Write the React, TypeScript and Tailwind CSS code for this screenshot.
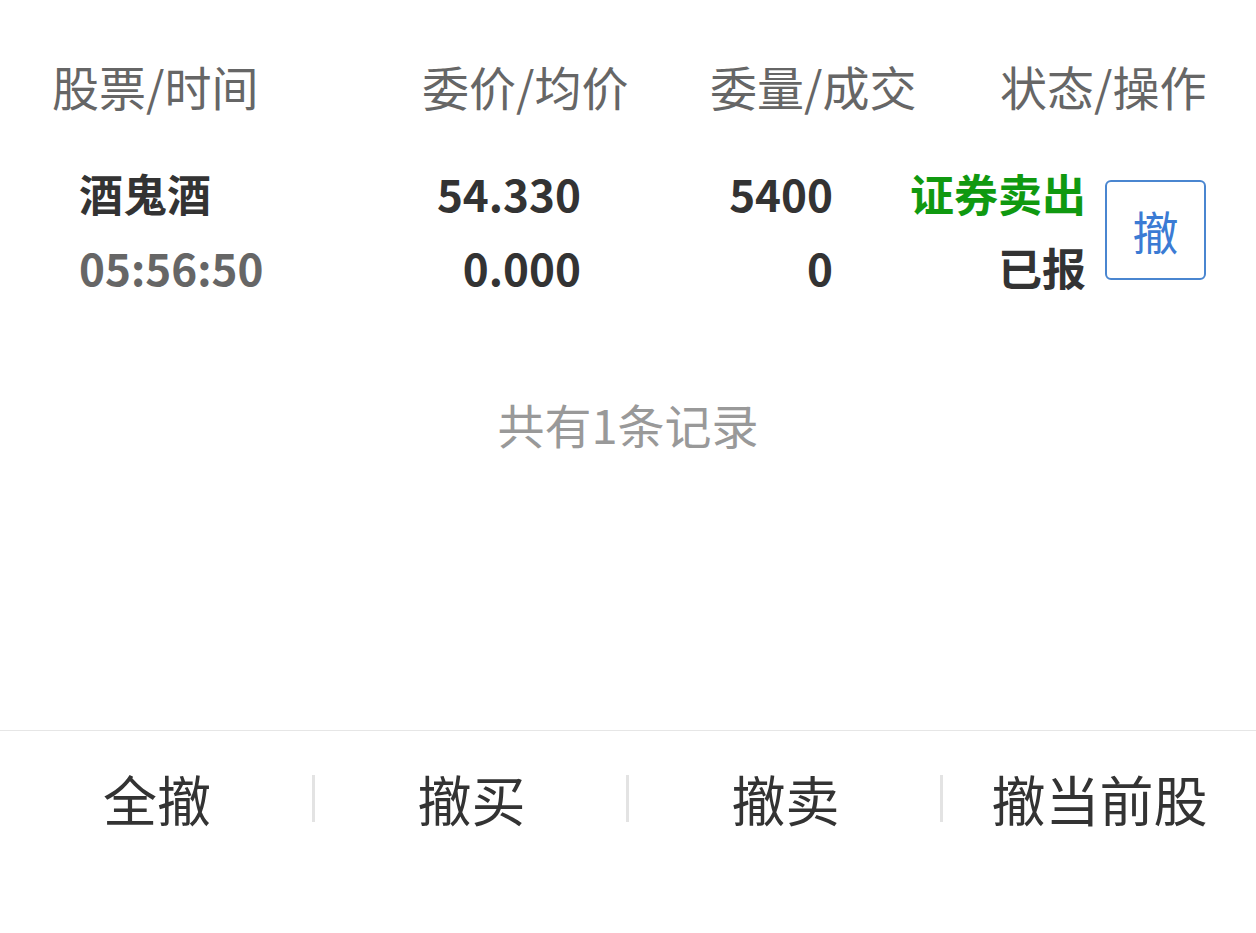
const font = { fontFamily: '"Noto Sans CJK SC", "Noto Sans", sans-serif' };

const actions = ["全撤", "撤买", "撤卖", "撤当前股"];

export default function App() {
  return (
    <div
      className="flex h-[933px] w-[1256px] flex-col bg-white font-['Noto_Sans_CJK_SC',sans-serif]"
      style={font}
    >
      <div className="flex-1">
        {/* column headers */}
        <div className="flex pl-[52px] pt-[60px] text-[47px] leading-[52px] text-[#666]">
          <div className="w-[370px]">股票/时间</div>
          <div className="w-[288px]">委价/均价</div>
          <div className="w-[290px]">委量/成交</div>
          <div>状态/操作</div>
        </div>

        {/* order row */}
        <div className="mt-[44px] flex items-center pl-[79px] text-[44px] font-bold leading-[74px] text-[#333]">
          <div className="w-[182px]">
            <div>酒鬼酒</div>
            <div className="text-[#666]">05:56:50</div>
          </div>
          <div className="w-[320px] text-right">
            <div>54.330</div>
            <div>0.000</div>
          </div>
          <div className="w-[252px] text-right">
            <div>5400</div>
            <div>0</div>
          </div>
          <div className="w-[253px] text-right">
            <div className="text-[#109910]">证券卖出</div>
            <div>已报</div>
          </div>
          <button className="ml-[19px] flex h-[100px] w-[101px] items-center justify-center rounded-[6px] border-[2.5px] border-[#4a86d0] text-[46px] font-normal text-[#3b7bd4]">
            撤
          </button>
        </div>

        <div className="mt-[90px] text-center text-[47px] leading-[60px] text-[#999]">
          共有1条记录
        </div>
      </div>

      {/* bottom actions */}
      <div className="h-[203px] border-t border-[#e6e6e6]">
        <div className="flex h-[134px] items-center">
          {actions.map((label, i) => (
            <div key={label} className="flex flex-1 items-center">
              {i > 0 && <div className="-ml-[2px] h-[47px] w-[3px] bg-[#e3e3e3]" />}
              <div className="flex-1 text-center text-[54px] text-[#333]">
                {label}
              </div>
            </div>
          ))}
        </div>
      </div>
    </div>
  );
}
